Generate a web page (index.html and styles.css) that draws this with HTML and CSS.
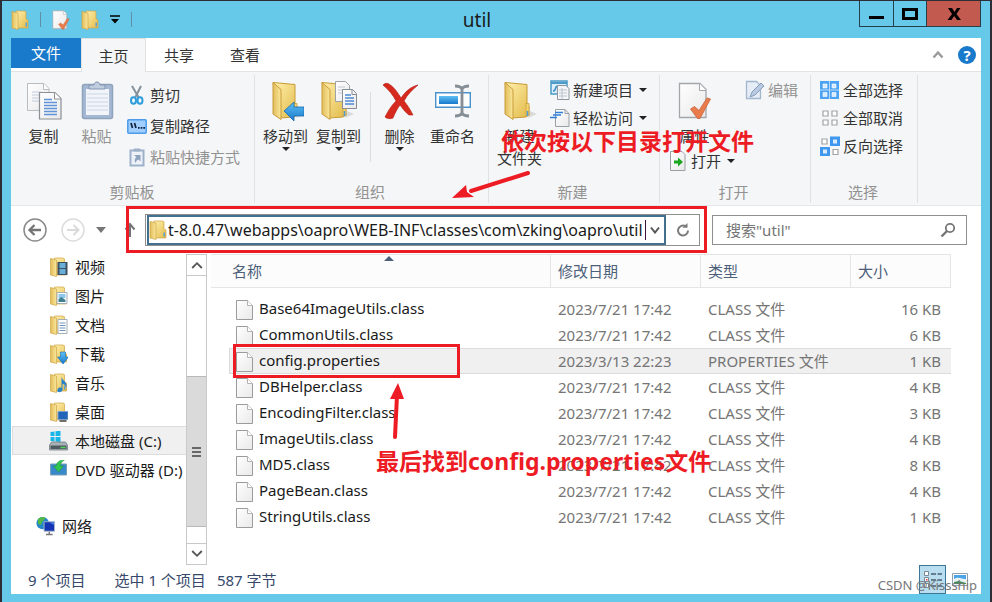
FILE: index.html
```html
<!DOCTYPE html>
<html lang="zh-CN">
  <head>
    <meta charset="UTF-8" />
    <meta name="viewport" content="width=device-width, initial-scale=1.0" />
    <title>util</title>
    <link rel="stylesheet" href="styles.css">
  </head>
  <body>
    <!-- Shared icons -->
    <svg class="defs" aria-hidden="true">
      <defs>
        <linearGradient id="gold" x1="0" y1="0" x2="1" y2="1">
          <stop offset="0" stop-color="#fff0ae" />
          <stop offset="1" stop-color="#e2ba48" />
        </linearGradient>
        <linearGradient id="goldSide" x1="0" y1="0" x2="1" y2="0">
          <stop offset="0" stop-color="#e2bd5a" />
          <stop offset="1" stop-color="#fae79c" />
        </linearGradient>
        <linearGradient id="paper" x1="0" y1="0" x2="1" y2="1">
          <stop offset="0" stop-color="#ffffff" />
          <stop offset="1" stop-color="#e9e9e9" />
        </linearGradient>
        <linearGradient id="blue" x1="0" y1="0" x2="0" y2="1">
          <stop offset="0" stop-color="#5fc0f5" />
          <stop offset="1" stop-color="#1878cc" />
        </linearGradient>
        <symbol id="folder" viewBox="0 0 18 20">
          <path d="M5 1h9l1 1v7l2 1v8H5z" fill="url(#gold)" stroke="#d0a545" stroke-width=".7" />
          <path d="M1 1.5L7 3v16.500L1 18z" fill="url(#goldSide)" stroke="#d0a545" stroke-width=".7" />
          <path d="M14.500 12.500h1.500v4h-1.500z" fill="#5aa0d8" />
        </symbol>
        <symbol id="folder-big" viewBox="0 0 36 40">
          <path d="M28 30l7 3-9 4z" fill="#cfcfcf" opacity=".7" />
          <path d="M3 1.500l22 2v20l2 1.500v9l-3 2-14 1z" fill="url(#gold)" stroke="#c99b37" />
          <path d="M3 1.500l8 7v30L3 33z" fill="url(#goldSide)" stroke="#c99b37" />
          <path d="M24 22.500h3v12h-3z" fill="#f3d36c" stroke="#c99b37" stroke-width=".7" />
          <path d="M25.500 30v5" stroke="#4b9de0" stroke-width="1.500" />
        </symbol>
        <symbol id="file" viewBox="0 0 17 20">
          <path d="M.5.500h11l5 5v14H.5z" fill="url(#paper)" stroke="#9b9b9b" />
          <path d="M11.500.5v5h5" fill="#fff" stroke="#b4b4b4" />
        </symbol>
        <symbol id="page-check" viewBox="0 0 34 38">
          <path d="M1.500 1.500H22l6 6v28H1.500z" fill="url(#paper)" stroke="#a3a7ab" stroke-width="1.300" />
          <path d="M21.500 1.500v7h6.500" fill="#fff" stroke="#a3a7ab" />
          <path d="M12.500 27l4-2.500 4.500 4 8-12.500 3.500 1L22 36.500h-2.500z" fill="#e87c4c" stroke="#c96337" stroke-width=".8" />
        </symbol>
      </defs>
    </svg>

    <div class="window">
      <header class="titlebar">
        <div class="quick-access">
          <svg class="qa-icon"><use href="#folder" /></svg>
          <span class="qa-sep"></span>
          <button aria-label="属性"><svg class="qa-icon"><use href="#page-check" /></svg></button>
          <button aria-label="新建文件夹"><svg class="qa-icon"><use href="#folder" /></svg></button>
          <button aria-label="自定义快速访问工具栏"><svg class="qa-more" viewBox="0 0 10 9"><path d="M0 1h10" stroke="#000" stroke-width="1.500" /><path d="M1 4h8L5 8.500z" /></svg></button>
          <span class="qa-sep"></span>
        </div>
        <h1>util</h1>
        <div class="window-buttons">
          <button class="min" aria-label="最小化"><svg viewBox="0 0 16 14"><path d="M0 9h15v3H0z" /></svg></button>
          <button class="max" aria-label="最大化"><svg viewBox="0 0 16 14"><path d="M1.500 2.500h13v9h-13z" fill="none" stroke="#000" stroke-width="3" /></svg></button>
          <button class="close" aria-label="关闭"><svg viewBox="0 0 16 14"><path d="M2 1h4l2.500 4L11 1h3.500l-4 6 4.500 6h-4L8.200 9 5.500 13h-4L6 7z" /></svg></button>
        </div>
      </header>

      <div class="client">
        <nav class="tabs">
          <button class="tab file-tab">文件</button>
          <button class="tab active">主页</button>
          <button class="tab">共享</button>
          <button class="tab">查看</button>
          <div class="tab-tools">
            <button aria-label="最小化功能区"><svg class="chevron" viewBox="0 0 12 9"><path d="M1.500 7.500L6 2.500l4.500 5" fill="none" stroke="#9b9b9b" stroke-width="2.400" /></svg></button>
            <button class="help" aria-label="帮助">?</button>
          </div>
        </nav>

        <section class="ribbon">
          <div class="group clipboard">
            <div class="group-items">
              <button class="big">
                <svg viewBox="0 0 36 40">
                  <path d="M1.500 2.500H18l5 5v22H1.500z" fill="url(#paper)" stroke="#b9bdc1" />
                  <path d="M17.500 2.500v6H23" fill="#fff" stroke="#b9bdc1" />
                  <path d="M6 11h9M6 14h7M6 17h7M6 20h7" stroke="#c3cbe0" />
                  <path d="M13.500 11.500H29l6 6v20.500H13.500z" fill="url(#paper)" stroke="#8c9094" stroke-width="1.200" />
                  <path d="M28.500 11.500v6.500H35" fill="#fff" stroke="#8c9094" />
                  <path d="M18 18.500h8M18 21.500h13M18 24.500h13M18 27.500h13M18 30.500h13M18 33.500h13" stroke="#5f95d8" stroke-width="1.500" />
                </svg>
                <span>复制</span>
              </button>
              <button class="big disabled">
                <svg viewBox="0 0 36 40">
                  <rect x="3.500" y="3.500" width="30" height="34" rx="2" fill="#a5b8d3" stroke="#90a3bd" stroke-width="1.500" />
                  <path d="M7 8h23v26H7z" fill="#f1f4f9" />
                  <path d="M8 13h21M8 17h21M8 21h21M8 25h21M8 29h21" stroke="#ccd6e4" />
                  <path d="M10 8V4h5c0-4 6-4 6 0h5v4z" fill="#c0cddf" stroke="#8295b0" />
                </svg>
                <span>粘贴</span>
              </button>
              <div class="stack wide">
                <button class="small">
                  <svg viewBox="0 0 20 20"><path d="M5 1l7 12M14 1L8 13" stroke="#84919c" stroke-width="2" /><ellipse cx="6.500" cy="15.500" rx="2.500" ry="3.300" fill="none" stroke="#2d9ddd" stroke-width="2" /><ellipse cx="13" cy="15.500" rx="2.500" ry="3.300" fill="none" stroke="#2d9ddd" stroke-width="2" /></svg>
                  剪切
                </button>
                <button class="small">
                  <svg viewBox="0 0 20 20"><rect x=".8" y="3.800" width="18.400" height="13.500" rx="1" fill="#9fceff" stroke="#4b9bea" stroke-width="1.500" /><path d="M4 7l1.500 5M7.500 7L9 12" stroke="#10233c" stroke-width="1.700" /><path d="M11 11h1.700v1.700H11zM13.700 11h1.700v1.700h-1.700zM16.300 11H18v1.700h-1.700z" fill="#10233c" /></svg>
                  复制路径
                </button>
                <button class="small disabled">
                  <svg viewBox="0 0 20 20"><path d="M3.500 3.500h13v15h-13z" fill="#eef2f8" stroke="#9eb1cb" stroke-width="2" /><path d="M7 4V2h6v2z" fill="#9eb1cb" stroke="#9eb1cb" /><path d="M7 8h6.500v6.500L11.500 12.500c-1.500.5-2.500 1.500-3 3.500-1.500-2.500-.5-5 1-5.700z" fill="#8da2bd" /></svg>
                  粘贴快捷方式
                </button>
              </div>
            </div>
            <div class="group-name">剪贴板</div>
          </div>

          <div class="group organize">
            <div class="group-items">
              <button class="big">
                <svg viewBox="-2 0 36 40"><use href="#folder-big" width="36" height="40" /><path d="M14 30l10-9v5h10v9H24v5z" fill="url(#blue)" stroke="#1b69ad" stroke-width=".8" /></svg>
                <span>移动到</span>
                <i class="arrow"></i>
              </button>
              <button class="big">
                <svg viewBox="0 0 36 40"><use href="#folder-big" x="-2" width="36" height="40" /><path d="M14.500.5h10l4 4v16h-14z" fill="url(#paper)" stroke="#9ea3a8" /><path d="M17 6h7M17 9h8M17 12h8" stroke="#c2c8d4" /><path d="M21.500 8.500h10l4 4v15h-14z" fill="url(#paper)" stroke="#888d93" /><path d="M31 8.500v5h4.500" fill="none" stroke="#888d93" /><path d="M24 14h6M24 17h9M24 20h9M24 23h9" stroke="#4c8bd5" stroke-width="1.400" /></svg>
                <span>复制到</span>
                <i class="arrow"></i>
              </button>
              <span class="inner-sep"></span>
              <button class="big">
                <svg viewBox="0 0 36 40"><path d="M1 4c2-2 4-2 6-1 5 3 9 9 12 14 5-7 9-11 17-13-6 5-11 10-14 16 4 5 6 8 9 14h-4c-4-3-6-6-9-10-3 4-5 8-7 13-2 1-6 1-8-1 3-6 6-11 11-16C11 14 7 9 1 4z" fill="#d62a1e" stroke="#b31d14" stroke-width=".6" /></svg>
                <span>删除</span>
                <i class="arrow"></i>
              </button>
              <button class="big">
                <svg viewBox="0 0 36 40"><path d="M.7 11.700h34.600v14.600H.7z" fill="#fff" stroke="#4a92cb" stroke-width="1.400" /><path d="M4 15h19v8H4z" fill="url(#blue)" /><path d="M20 5c4 0 6 1 7 3 1-2 3-3 7-3M20 35c4 0 6-1 7-3 1 2 3 3 7 3M27 7v26" fill="none" stroke="#858d95" stroke-width="2.800" /></svg>
                <span>重命名</span>
              </button>
            </div>
            <div class="group-name">组织</div>
          </div>

          <div class="group create">
            <div class="group-items">
              <button class="big">
                <svg viewBox="0 0 36 40"><use href="#folder-big" width="36" height="40" /></svg>
                <span>新建<br />文件夹</span>
              </button>
              <div class="stack">
                <button class="small">
                  <svg viewBox="0 0 20 20"><path d="M1 1h16v13H1z" fill="#dceefb" stroke="#4b9ac8" stroke-width="1.500" /><path d="M1 3h16" stroke="#4b9ac8" stroke-width="2" /><path d="M3 11c4 0 1-5 5-5M9 6h4" fill="none" stroke="#3c8fc3" stroke-width="1.500" /><path d="M7.500 5.500H16l3 3v11H7.500z" fill="#f6f6f6" stroke="#8d969e" /><path d="M9 10h8M9 13h8M9 16h8M12 8v11" stroke="#b9c4cf" /></svg>
                  新建项目
                  <i class="arrow"></i>
                </button>
                <button class="small">
                  <svg viewBox="0 0 20 20"><path d="M5.500 1.500H15l4 4v13H5.500z" fill="url(#paper)" stroke="#9a9fa4" /><path d="M15 1.500v4h4" fill="none" stroke="#9a9fa4" /><path d="M5 4.500h8M3 7h8M0 9.500h7" stroke="#2f7fd6" stroke-width="1.500" /></svg>
                  轻松访问
                  <i class="arrow"></i>
                </button>
              </div>
            </div>
            <div class="group-name">新建</div>
          </div>

          <div class="group open">
            <div class="group-items">
              <div class="stack">
                <button class="big">
                  <svg viewBox="0 -1 34 40"><use href="#page-check" width="34" height="38" /></svg>
                  <span>属性</span>
                </button>
                <button class="small">
                  <svg viewBox="0 0 20 20"><path d="M2.500.5H14l3 3v16H2.500z" fill="url(#paper)" stroke="#9a9fa4" /><path d="M6 9.500h4V6.500l5 4.500-5 4.500v-3H6z" fill="#19a51f" /></svg>
                  打开
                  <i class="arrow"></i>
                </button>
              </div>
              <div class="stack edit">
                <button class="small disabled">
                  <svg viewBox="0 0 20 20"><path d="M1.500 1.500h10l4 4v13h-14z" fill="#e5edf7" stroke="#a5b6cf" stroke-width="1.300" /><path d="M5 17l2-5 9-9 3 3-9 9z" fill="#b9cae0" stroke="#869dbd" /></svg>
                  编辑
                </button>
              </div>
            </div>
            <div class="group-name">打开</div>
          </div>

          <div class="group select">
            <div class="group-items">
              <div class="stack">
                <button class="small">
                  <svg viewBox="0 0 20 20"><path d="M0 1h19v18H0z" fill="#4da3f3" /><path d="M9.500 1v18M0 10h19" stroke="#b7dafa" /><path d="M3 4h4v4H3zM12 4h4v4h-4zM3 12.500h4v4H3zM12 12.500h4v4h-4z" fill="#d9ecfd" stroke="#fff" stroke-width=".6" /></svg>
                  全部选择
                </button>
                <button class="small">
                  <svg viewBox="0 0 20 20"><path d="M3 3h5v5H3zM12 3h5v5h-5zM3 12h5v5H3zM12 12h5v5h-5z" fill="#fff" stroke="#a3a3a3" stroke-width="1.200" /></svg>
                  全部取消
                </button>
                <button class="small">
                  <svg viewBox="0 0 20 20"><path d="M2 3h5v5H2zM13 13.500h5v5h-5z" fill="#fff" stroke="#a3a3a3" stroke-width="1.200" /><path d="M10 .5h10V10H10zM0 11h10v9.500H0z" fill="#3f97ef" /><path d="M13 3.500h4v4h-4zM3 13.500h4v4H3z" fill="#d9ecfd" /></svg>
                  反向选择
                </button>
              </div>
            </div>
            <div class="group-name">选择</div>
          </div>
        </section>

        <div class="navbar">
          <button aria-label="后退"><svg class="round" viewBox="0 0 24 24"><circle cx="12" cy="12" r="11" fill="none" stroke="#8a8a8a" stroke-width="1.500" /><path d="M6.500 12H18M11.500 7l-5 5 5 5" fill="none" stroke="#757575" stroke-width="2.300" /></svg></button>
          <button class="forward" aria-label="前进"><svg class="round" viewBox="0 0 24 24"><circle cx="12" cy="12" r="11" fill="none" stroke="#dcdcdc" stroke-width="1.500" /><path d="M17.500 12H6M12.500 7l5 5-5 5" fill="none" stroke="#dadada" stroke-width="2" /></svg></button>
          <button class="recent" aria-label="最近浏览的位置"><svg viewBox="0 0 10 6"><path d="M0 0h10L5 6z" fill="#777" /></svg></button>
          <button class="up" aria-label="上移到"><svg viewBox="0 0 12 16"><path d="M6 15V2M1.500 7.500L6 2l4.500 5.500" fill="none" stroke="#757575" stroke-width="2" /></svg></button>
          <div class="address">
            <div class="address-field">
              <svg class="address-icon"><use href="#folder" /></svg>
              <input type="text" aria-label="地址" value="t-8.0.47\webapps\oapro\WEB-INF\classes\com\zking\oapro\util" />
              <span class="caret"></span>
              <button aria-label="以前的位置"><svg class="drop" viewBox="0 0 10 8"><path d="M1 1.500l4 5 4-5" fill="none" stroke="#555" stroke-width="2" /></svg></button>
            </div>
            <button class="refresh" aria-label="刷新"><svg viewBox="0 0 16 16"><path d="M10.500 4.200A5 5 0 1 0 13 8.500" fill="none" stroke="#7b7b7b" stroke-width="2" /><path d="M7.500 5.800h5V1z" fill="#7b7b7b" /></svg></button>
            <span class="mark address-mark"></span>
          </div>
          <div class="search">
            <input type="text" aria-label="搜索" placeholder='搜索"util"' />
            <svg viewBox="0 0 16 16"><circle cx="10" cy="6" r="4.200" fill="none" stroke="#757575" stroke-width="1.800" /><path d="M7 9l-5.500 5.500" stroke="#757575" stroke-width="2.400" /></svg>
          </div>
        </div>

        <main class="content">
          <aside class="tree">
            <ul>
              <li><a href="#"><svg viewBox="0 0 18 20"><use href="#folder" width="18" height="20" /><path d="M8 5h10v13H8z" fill="#3d4f60" /><path d="M10 6h6v5h-6zM10 12h6v5h-6z" fill="#67afd8" /></svg>视频</a></li>
              <li><a href="#"><svg viewBox="0 0 18 20"><use href="#folder" width="18" height="20" /><path d="M7.500 6.500h10v11h-10z" fill="#fff" stroke="#a3aeb7" /><path d="M9 8h7v4H9z" fill="#8fc8ee" /><path d="M9 16v-3l3-2 4 3v2z" fill="#3e8291" /></svg>图片</a></li>
              <li><a href="#"><svg viewBox="0 0 18 20"><use href="#folder" width="18" height="20" /><path d="M8.500 4.500h9v14h-9z" fill="#fff" stroke="#a3aeb7" /><path d="M10 8h6M10 10.500h6M10 13h6M10 15.500h6" stroke="#6f94bd" /></svg>文档</a></li>
              <li><a href="#"><svg viewBox="0 0 18 20"><use href="#folder" width="18" height="20" /><path d="M11 8h5v5h3l-5.500 7L8 13h3z" fill="url(#blue)" stroke="#1a6db5" stroke-width=".6" /></svg>下载</a></li>
              <li><a href="#"><svg viewBox="0 0 18 20"><use href="#folder" width="18" height="20" /><path d="M12 4c1 4 6 4 5 11-1-3-2-4-4-4v6c-1 3-6 3-5 0 0-2 2-3 4-2z" fill="#2a83c9" /></svg>音乐</a></li>
              <li><a href="#"><svg viewBox="0 0 18 20"><use href="#folder" width="18" height="20" /><path d="M8.500 9.500h10v8h-10z" fill="#2365b8" stroke="#7da3cc" /><path d="M10 19h7" stroke="#444" stroke-width="1.500" /></svg>桌面</a></li>
              <li class="current"><a href="#"><svg viewBox="0 0 18 20"><path d="M1 1l4-.6V5H1zM6 .3L11-.2V5H6zM1 6h4v4.500L1 10zM6 6h5v5l-5-.5z" fill="#19b5e8" /><path d="M2 11h14l2 3v5H0v-5z" fill="#a9b1b6" stroke="#69737a" stroke-width=".7" /><path d="M1 14.500h16v3.500H1z" fill="#4e5b60" /><path d="M11 16.500h5" stroke="#50d65d" stroke-width="1.500" /></svg>本地磁盘 (C:)</a></li>
              <li><a href="#"><svg viewBox="0 0 18 20"><path d="M1 4h16v11H1z" fill="#3889c9" stroke="#7a9eb8" /><path d="M15 0C9 0 7 3 7 6H4l5 6 5-6h-3c0-3 1-4 4-6z" fill="#33c550" stroke="#1c9134" stroke-width=".5" /></svg>DVD 驱动器 (D:)</a></li>
              <li class="network"><a href="#"><svg viewBox="0 0 20 20"><circle cx="7" cy="7" r="6.500" fill="#2186cb" /><path d="M2 3c3-3 7-3 8-1L7 5 5 9 2 8zM8 8l4 1-3 4z" fill="#53b847" /><path d="M8.500 5.500h11v10h-11z" fill="#1534b4" stroke="#a5b5c7" /><path d="M14 6l5 3v-3z" fill="#4d82e6" /><path d="M14 16v2.500M10.500 19h7" stroke="#777" stroke-width="1.500" /></svg>网络</a></li>
            </ul>
            <div class="scrollbar">
              <button aria-label="向上滚动"><svg viewBox="0 0 10 8"><path d="M1 6.500l4-4 4 4" fill="none" stroke="#555" stroke-width="1.500" /></svg></button>
              <div class="track"><div class="thumb"><i></i><i></i><i></i></div></div>
              <button aria-label="向下滚动"><svg viewBox="0 0 10 8"><path d="M1 1.500l4 4 4-4" fill="none" stroke="#555" stroke-width="1.500" /></svg></button>
            </div>
          </aside>

          <div class="files">
            <table>
              <colgroup>
                <col />
                <col class="col-date" />
                <col class="col-type" />
                <col class="col-size" />
              </colgroup>
              <thead>
                <tr><th class="sorted">名称</th><th>修改日期</th><th>类型</th><th>大小</th></tr>
              </thead>
              <tbody>
                <tr><td><svg><use href="#file" /></svg>Base64ImageUtils.class</td><td>2023/7/21 17:42</td><td>CLASS 文件</td><td>16 KB</td></tr>
                <tr><td><svg><use href="#file" /></svg>CommonUtils.class</td><td>2023/7/21 17:42</td><td>CLASS 文件</td><td>6 KB</td></tr>
                <tr class="selected"><td><svg><use href="#file" /></svg>config.properties<span class="mark file-mark"></span></td><td>2023/3/13 22:23</td><td>PROPERTIES 文件</td><td>1 KB</td></tr>
                <tr><td><svg><use href="#file" /></svg>DBHelper.class</td><td>2023/7/21 17:42</td><td>CLASS 文件</td><td>4 KB</td></tr>
                <tr><td><svg><use href="#file" /></svg>EncodingFilter.class</td><td>2023/7/21 17:42</td><td>CLASS 文件</td><td>3 KB</td></tr>
                <tr><td><svg><use href="#file" /></svg>ImageUtils.class</td><td>2023/7/21 17:42</td><td>CLASS 文件</td><td>4 KB</td></tr>
                <tr><td><svg><use href="#file" /></svg>MD5.class</td><td>2023/7/21 17:42</td><td>CLASS 文件</td><td>8 KB</td></tr>
                <tr><td><svg><use href="#file" /></svg>PageBean.class</td><td>2023/7/21 17:42</td><td>CLASS 文件</td><td>4 KB</td></tr>
                <tr><td><svg><use href="#file" /></svg>StringUtils.class</td><td>2023/7/21 17:42</td><td>CLASS 文件</td><td>1 KB</td></tr>
              </tbody>
            </table>
          </div>
        </main>

        <footer class="status">
          <span>9 个项目</span>
          <span class="chosen">选中 1 个项目</span>
          <span>587 字节</span>
          <div class="views">
            <button class="on" aria-label="详细信息"><svg viewBox="0 0 20 20"><path d="M1.500 1.500h4v4h-4zM1.500 7.500h4v4h-4zM1.500 13.500h4v4h-4z" fill="#fff" stroke="#7c8a94" /><path d="M8 4h5M14.500 4H19M8 10h5M14.500 10H19M8 16h5M14.500 16H19" stroke="#47606f" stroke-width="1.300" /><path d="M3 9h1.500v1.500H3z" fill="#e33" /></svg></button>
            <button aria-label="大图标"><svg viewBox="0 0 20 20"><path d="M2.500 3.500h15v12h-15z" fill="#fff" stroke="#8ea0ad" /><path d="M4 5h12v9H4z" fill="#4aa4e6" /><path d="M4 9c4-3 8 0 12 0v5H4z" fill="#e8f3f5" /><path d="M4 12l5-1 7 2v1H4z" fill="#3f8d55" /></svg></button>
          </div>
        </footer>
      </div>
    </div>

    <!-- Notes drawn over the window -->
    <div class="note note-path">依次按以下目录打开文件</div>
    <svg class="note arrow-path" viewBox="0 0 80 34"><path d="M77 4L20 22" stroke="#ed1c24" stroke-width="4" stroke-linecap="round" /><path d="M1 29l14-13 1 7 7 5z" fill="#ed1c24" /></svg>
    <div class="note note-file">最后找到config.properties文件</div>
    <svg class="note arrow-file" viewBox="0 0 16 58"><path d="M6 54L8 12" stroke="#ed1c24" stroke-width="4" stroke-linecap="round" /><path d="M9 0l6 16H1z" fill="#ed1c24" /></svg>
    <div class="watermark">CSDN @Kissship</div>
  </body>
</html>
```

FILE: styles.css
```css
* {
  box-sizing: border-box;
}

body {
  margin: 0;
  height: 100vh;
  overflow: hidden;
  position: relative;
  background-color: #2d2d35;
  font-family: "Noto Sans", "Noto Sans CJK SC", sans-serif;
  font-size: 15px;
  line-height: 20px;
  color: #333;
}

.defs {
  position: absolute;
  width: 0;
  height: 0;
}

button {
  border: none;
  padding: 0;
  background: none;
  font: inherit;
  color: inherit;
  display: flex;
  align-items: center;
  justify-content: center;
}

input {
  border: none;
  outline: none;
  padding: 0;
  background: none;
  font: inherit;
  color: #1a1a1a;
  min-width: 0;
}

.window {
  height: 100%;
  display: flex;
  flex-direction: column;
  background-color: #66c9ea;
  border: 2px solid #2d2d35;
  border-width: 1px 2px 0 2px;
  padding: 0 9px 8px;
}

/* Title bar */
.titlebar {
  height: 37px;
  display: grid;
  grid-template-columns: 1fr auto 1fr;
  align-items: center;
}

.titlebar h1 {
  margin: 0 38px 0 0;
  font-size: 19px;
  font-weight: 400;
  color: #1a1a1a;
}

.quick-access {
  display: flex;
  align-items: center;
  gap: 11px;
}

.qa-icon {
  width: 18px;
  height: 20px;
}

.qa-more {
  width: 10px;
  height: 9px;
}

.qa-sep {
  width: 1px;
  height: 15px;
  background-color: #5f8fa3;
}

.window-buttons {
  display: flex;
  justify-self: end;
  align-self: start;
  height: 26px;
  border: 1px solid #26404a;
  border-top: none;
}

.window-buttons button {
  width: 33px;
  border-left: 1px solid #26404a;
}

.window-buttons .min {
  border-left: none;
}

.window-buttons .close {
  width: 54px;
  background-color: #c35a50;
}

.window-buttons svg {
  width: 16px;
  height: 14px;
}

.client {
  flex: 1;
  min-height: 0;
  display: flex;
  flex-direction: column;
  background-color: #fff;
}

/* Tabs */
.tabs {
  height: 34px;
  display: flex;
  border-bottom: 1px solid #e2e3e5;
}

.tab {
  width: 66px;
}

.file-tab {
  width: 70px;
  height: 30px;
  background-color: #1979ca;
  color: #fff;
}

.tab.active {
  width: 65px;
  height: 34px;
  background-color: #f5f6f7;
  border: 1px solid #dfe0e2;
  border-bottom: none;
}

.tab-tools {
  margin-left: auto;
  padding-right: 5px;
  display: flex;
  align-items: center;
  gap: 14px;
}

.chevron {
  width: 12px;
  height: 9px;
}

.help {
  width: 18px;
  height: 18px;
  border-radius: 50%;
  background-color: #1979ca;
  color: #fff;
  font-weight: 700;
}

/* Ribbon */
.ribbon {
  height: 134px;
  display: grid;
  grid-template-columns: 244px 234px 171px 151px 107px;
  padding-bottom: 2px;
  background-color: #f5f6f7;
  border-bottom: 1px solid #e6e7e8;
}

.group {
  display: flex;
  flex-direction: column;
  position: relative;
  padding-left: 4px;
}

.group::after {
  content: "";
  position: absolute;
  top: 3px;
  right: 0;
  bottom: 0;
  width: 1px;
  background-color: #e1e2e4;
}

.group-items {
  flex: 1;
  display: flex;
  align-items: flex-start;
}

.group-name {
  padding-right: 8px;
  line-height: 22px;
  text-align: center;
  color: #929292;
}

.big {
  width: 53px;
  padding-top: 9px;
  flex-direction: column;
  line-height: 22px;
  white-space: nowrap;
}

.big svg {
  width: 36px;
  height: 40px;
  margin-bottom: 4px;
}

.arrow {
  border: 4px solid transparent;
  border-top-color: #222;
  border-bottom: none;
}

.stack {
  display: flex;
  flex-direction: column;
  align-items: flex-start;
  padding: 4px 0 0 4px;
}

.small {
  height: 28px;
  gap: 3px;
  white-space: nowrap;
}

.small svg {
  width: 20px;
  height: 20px;
}

.small .arrow {
  margin-left: 3px;
}

.disabled {
  color: #929292;
}

.clipboard {
  padding-left: 6px;
}

.wide {
  padding-top: 7px;
}

.wide .small {
  height: 31px;
}

.inner-sep {
  width: 1px;
  height: 70px;
  margin: 20px 2px 0 5px;
  background-color: #dddee0;
}

.open .stack {
  padding-top: 0;
}

.open .edit {
  padding: 4px 0 0 10px;
}

.select {
  padding-left: 5px;
}

/* Address row */
.navbar {
  height: 48px;
  display: flex;
  align-items: center;
  padding: 0 14px 0 12px;
}

.round {
  width: 24px;
  height: 24px;
}

.forward {
  margin-left: 14px;
}

.recent {
  margin-left: 11px;
}

.recent svg {
  width: 10px;
  height: 6px;
}

.up {
  margin: 0 9px 0 18px;
}

.up svg {
  width: 12px;
  height: 16px;
}

.address {
  flex: 1;
  height: 32px;
  display: flex;
  position: relative;
  border: 1px solid #8f8f8f;
  padding-left: 1px;
}

.address-field {
  flex: 1;
  display: flex;
  align-items: center;
  border: 2px solid #44708f;
  padding-right: 4px;
}

.address-icon {
  flex: none;
  width: 18px;
  height: 20px;
}

.address-field input {
  flex: 1;
  margin-left: 1px;
  font-size: 16px;
}

.caret {
  width: 1px;
  height: 20px;
  margin-right: 4px;
  background-color: #3b1240;
}

.drop {
  width: 10px;
  height: 8px;
}

.refresh {
  width: 33px;
}

.refresh svg {
  width: 16px;
  height: 16px;
}

.search {
  width: 255px;
  height: 30px;
  margin-left: 12px;
  padding: 0 10px 0 13px;
  display: flex;
  align-items: center;
  border: 1px solid #8f8f8f;
}

.search input {
  flex: 1;
  width: 0;
}

.search input::placeholder {
  color: #757575;
  opacity: 1;
}

.search svg {
  flex: none;
  width: 16px;
  height: 16px;
}

/* Folder tree */
.content {
  flex: 1;
  min-height: 0;
  display: flex;
}

.tree {
  width: 196px;
  display: flex;
}

.tree ul {
  flex: 1;
  min-width: 0;
  margin: -2px 0 0;
  padding: 0 0 0 1px;
  list-style: none;
}

.tree li {
  height: 29px;
  padding-left: 36px;
  border: 1px solid transparent;
  border-right: none;
  overflow: hidden;
}

.tree a {
  height: 27px;
  display: flex;
  align-items: center;
  gap: 7px;
  color: #1a1a1a;
  text-decoration: none;
  white-space: nowrap;
}

.tree a svg {
  flex: none;
  width: 19px;
  height: 20px;
}

.tree .current {
  background-color: #f0f0f0;
  border-color: #dcdcdc;
}

.tree .network {
  margin-top: 27px;
  padding-left: 23px;
}

.scrollbar {
  width: 21px;
  display: flex;
  flex-direction: column;
  border: 1px solid #c9c9c9;
}

.scrollbar button {
  height: 20px;
}

.scrollbar svg {
  width: 12px;
  height: 10px;
}

.track {
  flex: 1;
  display: flex;
  flex-direction: column;
  justify-content: flex-end;
  border: 1px solid #c9c9c9;
  border-width: 1px 0;
  padding-bottom: 16px;
}

.thumb {
  height: 60%;
  display: flex;
  flex-direction: column;
  align-items: center;
  justify-content: center;
  gap: 2px;
  background-color: #dadada;
  border: 1px solid #b9b9b9;
  border-width: 1px 0;
}

.thumb i {
  width: 9px;
  height: 2px;
  background-color: #666;
}

/* File list */
.files {
  flex: 1;
  padding: 0 30px 0 4px;
}

table {
  width: 100%;
  border-collapse: separate;
  border-spacing: 0;
  table-layout: fixed;
}

.col-date,
.col-type {
  width: 150px;
}

.col-size {
  width: 100px;
}

th {
  height: 34px;
  padding: 0 7px;
  text-align: left;
  font-weight: 400;
  color: #4c607a;
  background-color: #fcfcfc;
  border: 1px solid #e5e5e5;
  border-left: none;
}

th.sorted {
  padding-left: 21px;
  position: relative;
}

th.sorted::after {
  content: "";
  position: absolute;
  top: 1px;
  left: 51%;
  border: 5px solid transparent;
  border-top: none;
  border-bottom-color: #4c607a;
}

tbody::before {
  content: "";
  display: block;
  height: 8px;
}

td {
  height: 26px;
  padding: 0 7px;
  color: #757575;
  white-space: nowrap;
}

td:first-child {
  position: relative;
  padding-left: 25px;
  color: #1a1a1a;
}

td:last-child {
  padding-right: 10px;
  text-align: right;
}

td svg {
  width: 17px;
  height: 20px;
  margin-right: 6px;
  vertical-align: middle;
}

.selected td {
  background-color: #f0f0f0;
  border: 1px solid #dcdcdc;
  border-width: 1px 0;
}

/* The highlight starts a little left of the file icon */
.selected td:first-child {
  z-index: 0;
  background: none;
  border-color: transparent;
}

.selected td:first-child::before {
  content: "";
  position: absolute;
  inset: -1px 0 -1px 18px;
  z-index: -1;
  background-color: #f0f0f0;
  border: 1px solid #dcdcdc;
  border-right: none;
}

/* Status bar */
.status {
  height: 29px;
  display: flex;
  align-items: center;
  padding: 0 8px 0 17px;
  color: #36496b;
}

.chosen {
  margin: 0 11px 0 29px;
}

.views {
  margin-left: auto;
  height: 100%;
  display: flex;
}

.views button {
  width: 27px;
}

.views .on {
  background-color: #b9def0;
  border: 1px solid #3d7596;
}

.views svg {
  width: 20px;
  height: 20px;
}

/* Red marks and notes */
.mark {
  position: absolute;
  border: 3px solid #ed1c24;
}

.address-mark {
  inset: -9px -8px -8px -20px;
}

.file-mark {
  top: -5px;
  left: 22px;
  width: 227px;
  height: 34px;
}

.note {
  position: absolute;
  color: #ed1c24;
  font-size: 23px;
  font-weight: 700;
  line-height: 30px;
  white-space: nowrap;
}

.note-path {
  top: 126px;
  left: 501px;
}

.arrow-path {
  top: 169px;
  left: 451px;
  width: 80px;
  height: 34px;
}

.note-file {
  top: 446px;
  left: 376px;
}

.arrow-file {
  top: 383px;
  left: 389px;
  width: 16px;
  height: 58px;
}

.watermark {
  position: absolute;
  right: 15px;
  bottom: 7px;
  font-size: 13px;
  color: #777;
}
```
